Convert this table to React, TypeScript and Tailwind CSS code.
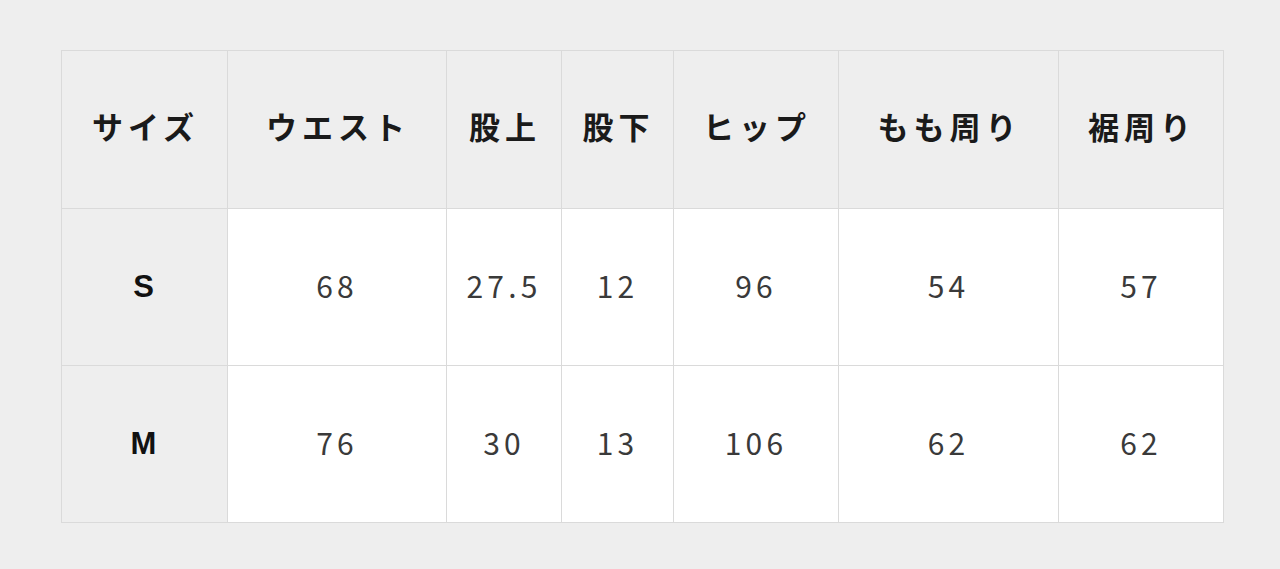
import React from 'react';

const headers = ['サイズ', 'ウエスト', '股上', '股下', 'ヒップ', 'もも周り', '裾周り'];
const widths = ['w-[166px]', 'w-[219px]', 'w-[115px]', 'w-[112px]', 'w-[165px]', 'w-[220px]', 'w-[165px]'];

const rows = [
    { size: 'S', values: ['68', '27.5', '12', '96', '54', '57'] },
    { size: 'M', values: ['76', '30', '13', '106', '62', '62'] },
];

const App = () => {
    return (
        <div className="min-h-screen w-full bg-[#eeeeee] pt-[50px] pl-[61px]">
            <table
                className="table-fixed border-collapse w-[1163px]"
                style={{ fontFamily: '"Noto Sans CJK JP", "Noto Sans", sans-serif' }}
            >
                <colgroup>
                    {widths.map((w, i) => (
                        <col key={i} className={w} />
                    ))}
                </colgroup>
                <thead>
                    <tr className="h-[158px] bg-[#eeeeee]">
                        {headers.map((h) => (
                            <th
                                key={h}
                                className="border border-[#dadada] text-center align-middle text-[31px] font-bold tracking-[0.16em] text-[#1a1a1a] pl-[2px] pb-[6px]"
                            >
                                {h}
                            </th>
                        ))}
                    </tr>
                </thead>
                <tbody>
                    {rows.map((r) => (
                        <tr key={r.size} className="h-[157px]">
                            <th className="border border-[#dadada] bg-[#eeeeee] text-center align-middle text-[31px] font-bold text-[#111111] font-['Liberation_Sans',sans-serif] pr-[2px]">
                                {r.size}
                            </th>
                            {r.values.map((v, i) => (
                                <td
                                    key={i}
                                    className="border border-[#dadada] bg-white text-center align-middle text-[30px] tracking-[0.14em] pb-[4px] text-[#3a3a3a]"
                                >
                                    {v}
                                </td>
                            ))}
                        </tr>
                    ))}
                </tbody>
            </table>
        </div>
    );
};

export default App;
